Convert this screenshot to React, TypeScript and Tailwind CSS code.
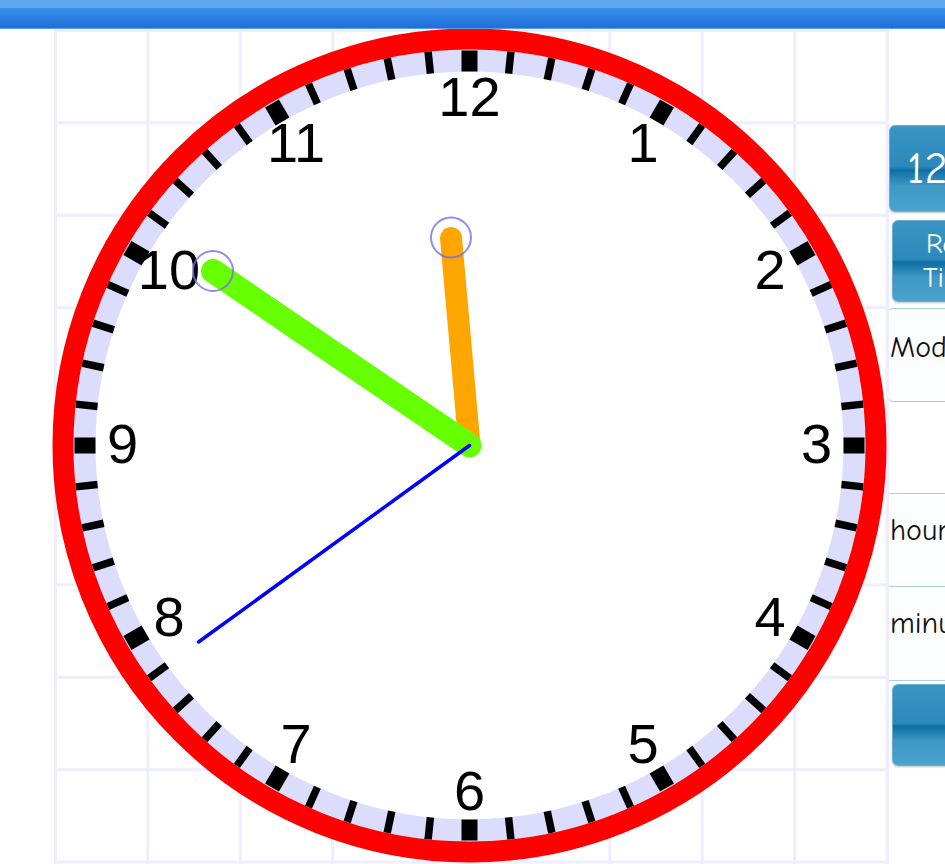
import React from "react";

const CX = 417.5;
const CY = 416.5;

function polar(r: number, deg: number) {
  const a = (deg * Math.PI) / 180;
  return { x: CX + r * Math.sin(a), y: CY - r * Math.cos(a) };
}

function ClockFace() {
  const ticks = Array.from({ length: 60 }, (_, i) => {
    const major = i % 5 === 0;
    const a = polar(374, i * 6);
    const b = polar(major ? 395 : 396, i * 6);
    return (
      <line
        key={i}
        x1={a.x}
        y1={a.y}
        x2={b.x}
        y2={b.y}
        stroke="#000"
        strokeWidth={major ? 16 : 7.5}
      />
    );
  });

  const numbers = Array.from({ length: 12 }, (_, i) => {
    const n = i + 1;
    const p = polar(347, n * 30);
    return (
      <text
        key={n}
        x={p.x}
        y={p.y + 17}
        textAnchor="middle"
        fontSize={56}
        fontFamily="'Liberation Sans', Arial, sans-serif"
        fill="#000"
      >
        {n}
      </text>
    );
  });

  return (
    <svg width={835} height={835} viewBox="0 0 835 835" className="block shrink-0">
      <circle cx={CX} cy={CY} r={396} fill="#fff" />
      <circle cx={CX} cy={CY} r={385} fill="none" stroke="#dcdcfc" strokeWidth={22} />
      {ticks}
      <circle cx={CX} cy={CY} r={406.5} fill="none" stroke="#ff0000" strokeWidth={21} />
      {numbers}
      {/* hour */}
      <line x1={CX} y1={CY} x2={399} y2={209} stroke="#ffa500" strokeWidth={22} strokeLinecap="round" />
      {/* minute */}
      <line x1={CX} y1={CY} x2={161} y2={242} stroke="#66ff00" strokeWidth={24} strokeLinecap="round" />
      {/* second */}
      <line x1={CX} y1={CY} x2={146.5} y2={613} stroke="#0000ff" strokeWidth={3.5} strokeLinecap="round" />
      <circle cx={399} cy={208.5} r={20} fill="none" stroke="#7070ee" strokeOpacity={0.8} strokeWidth={2} />
      <circle cx={161} cy={242} r={20} fill="none" stroke="#7070ee" strokeOpacity={0.8} strokeWidth={2} />
    </svg>
  );
}

const btn =
  "rounded-md border border-[#6aaed4] bg-[linear-gradient(to_bottom,#3a95c3_0%,#2b88ba_48%,#0d6ea5_52%,#3f98c5_70%,#4aa3cc_100%)] text-white shadow-[0_1px_2px_rgba(0,0,0,0.25)]";

export default function App() {
  return (
    <div
      className="w-[945px] h-[864px] overflow-hidden bg-white flex flex-col"
      style={{ fontFamily: "'Comic Sans MS', 'Comic Neue', 'Noto Sans', sans-serif" }}
    >
      <div className="h-[29px] shrink-0 bg-[linear-gradient(to_bottom,#5ea9ec_0px,#5ea9ec_8px,#3a90e9_8px,#1f6edb_28px,#5aa0e6_28px)]" />
      <div className="flex flex-1">
        <div className="relative w-[835px] ml-[54px] shrink-0 h-[835px] bg-[linear-gradient(to_right,#eeeeff_3px,transparent_3px),linear-gradient(to_bottom,#eeeeff_3px,transparent_3px)] bg-[size:92.4px_92.4px] border-r-[3px] border-[#eeeeff]">
          <div className="-ml-[2px]">
            <ClockFace />
          </div>
        </div>
        <div className="flex flex-col w-[170px] shrink-0 pt-[96px] pl-0">
          <div className={`${btn} h-[87px] flex items-center pl-[17px] text-[44px] leading-none`}>
            12 Hour
          </div>
          <div className={`${btn} h-[82px] ml-[3px] mt-[8px] flex flex-col items-start justify-center pl-[30px] text-[28px] leading-[34px]`}>
            <span className="pl-[3px]">Random</span>
            <span>Time</span>
          </div>
          <div className="h-[94px] -ml-[2px] mt-[6px] rounded-md border border-[#a8cfe6] bg-[#fcfdff] pl-[2px] pt-[16px] text-[30px] text-[#111]">
            Mode
          </div>
          <div className="h-[91px]" />
          <div className="-ml-[2px] border border-[#a8cfe6] bg-[#fdfeff] text-[30px] text-[#111]">
            <div className="h-[93px] pl-[2px] pt-[14px] border-b border-[#a8cfe6]">hours</div>
            <div className="h-[93px] pl-[2px] pt-[14px]">minutes</div>
          </div>
          <div className={`${btn} h-[82px] ml-[3px] mt-[3px]`} />
        </div>
      </div>
    </div>
  );
}
